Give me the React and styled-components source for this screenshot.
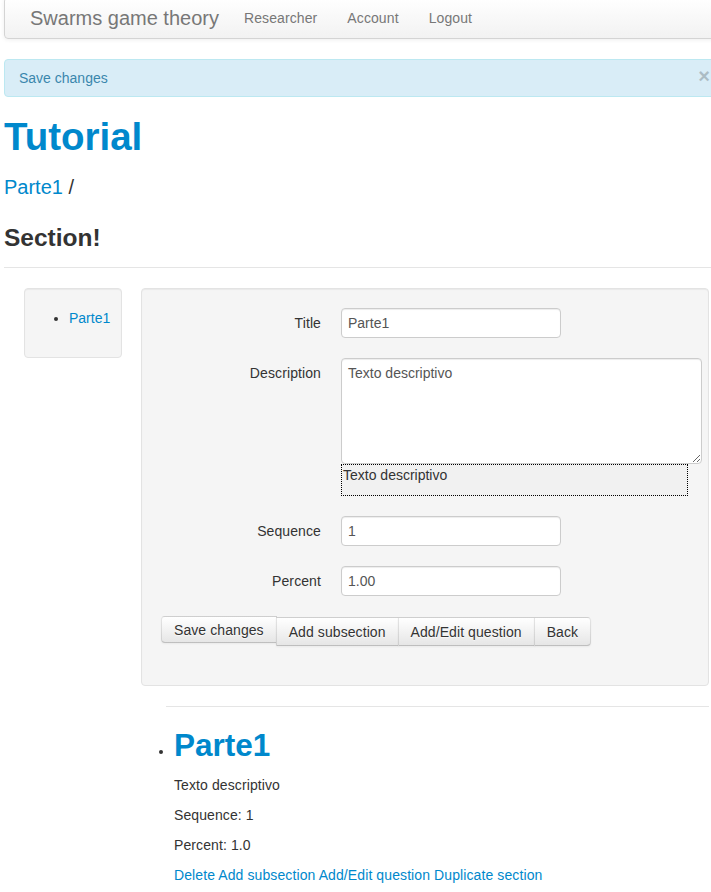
import React from "react";
import styled, { createGlobalStyle } from "styled-components";

const Global = createGlobalStyle`
  html, body { margin: 0; padding: 0; background: #fff; overflow-x: hidden; }
  body {
    font-family: "Liberation Sans", Arial, Helvetica, sans-serif;
    font-size: 14px;
    line-height: 20px;
    color: #333;
  }
  * { box-sizing: border-box; }
`;

const Page = styled.div`
  width: 721px;
  margin-left: 4px;
`;

const Navbar = styled.div`
  margin-top: -3px;
  margin-bottom: 20px;
  height: 42px;
  display: flex;
  align-items: center;
  padding-left: 25px;
  border: 1px solid #d4d4d4;
  border-radius: 4px;
  background: linear-gradient(to bottom, #ffffff, #f2f2f2);
  box-shadow: 0 1px 4px rgba(0, 0, 0, 0.065);
`;

const Brand = styled.a`
  font-size: 20px;
  line-height: 20px;
  color: #777;
  text-decoration: none;
  margin-right: 10px;
`;

const NavLink = styled.a`
  padding: 0 15px;
  font-size: 14px;
  letter-spacing: 0.1px;
  color: #777;
  text-decoration: none;
`;

const Alert = styled.div`
  display: flex;
  justify-content: space-between;
  padding: 8px 35px 8px 14px;
  border: 1px solid #bce8f1;
  border-radius: 4px;
  background: #d9edf7;
  color: #3a87ad;
  line-height: 20px;
  margin-bottom: 20px;
`;

const Close = styled.span`
  margin-right: -21px;
  margin-top: -2px;
  font-size: 20px;
  font-weight: bold;
  line-height: 20px;
  color: #000;
  opacity: 0.2;
`;

const Title = styled.h1`
  margin: 0 0 10px;
  font-size: 38.5px;
  line-height: 40px;
  font-weight: bold;
  color: #0088cc;
`;

const Crumbs = styled.div`
  font-size: 20px;
  line-height: 40px;
  color: #333;
`;

const Link = styled.a`
  color: #0088cc;
  text-decoration: none;
`;

const SectionTitle = styled.h3`
  margin: 11px 0 0;
  font-size: 24.5px;
  line-height: 40px;
  font-weight: bold;
  color: #333;
`;

const Rule = styled.hr`
  margin: ${(p) => p.$m || "0"};
  border: 0;
  border-top: 1px solid #e5e5e5;
  border-bottom: 1px solid #fff;
  height: 0;
`;

const Row = styled.div`
  display: flex;
  align-items: flex-start;
  padding-left: 20px;
  gap: 19px;
`;

const Well = styled.div`
  background: #f5f5f5;
  border: 1px solid #e3e3e3;
  border-radius: 4px;
  padding: 19px;
  box-shadow: inset 0 1px 1px rgba(0, 0, 0, 0.05);
  margin-bottom: 20px;
  width: ${(p) => p.$w}px;
  flex-shrink: 0;
`;

const NavList = styled.ul`
  margin: 0 0 10px 25px;
  padding: 0;
  line-height: 20px;
`;

const Main = styled.div`
  width: 568px;
  flex-shrink: 0;
  display: flex;
  flex-direction: column;
`;

const Group = styled.div`
  display: flex;
  align-items: flex-start;
  margin-bottom: 20px;
`;

const Label = styled.label`
  width: 160px;
  flex-shrink: 0;
  padding-top: 5px;
  text-align: right;
  line-height: 20px;
  letter-spacing: 0.1px;
  color: #333;
`;

const Controls = styled.div`
  margin-left: 20px;
  flex-shrink: 0;
  display: flex;
  flex-direction: column;
`;

const Input = styled.input`
  width: 220px;
  height: 30px;
  padding: 4px 6px;
  font-family: inherit;
  font-size: 14px;
  line-height: 20px;
  color: #555;
  background: #fff;
  border: 1px solid #ccc;
  border-radius: 4px;
  box-shadow: inset 0 1px 1px rgba(0, 0, 0, 0.075);
  outline: none;
`;

const TextArea = styled.textarea`
  width: 361px;
  height: 106px;
  padding: 4px 6px;
  font-family: inherit;
  font-size: 14px;
  line-height: 20px;
  color: #555;
  background: #fff;
  border: 1px solid #ccc;
  border-radius: 4px;
  box-shadow: inset 0 1px 1px rgba(0, 0, 0, 0.075);
  outline: none;
  display: block;
`;

const Preview = styled.div`
  width: 347px;
  min-height: 32px;
  padding: 0 1px;
  background: #f1f1f1;
  border: 1px dotted #000;
  line-height: 20px;
  color: #333;
`;

const BtnGroup = styled.div`
  display: flex;
  align-items: flex-start;
  margin-bottom: 20px;
`;

const Btn = styled.a`
  display: inline-block;
  padding: ${(p) => (p.$short ? "3px 12px 2px" : "4px 12px 3px")};
  margin-top: ${(p) => (p.$short ? "0" : "1px")};
  margin-left: ${(p) => (p.$first ? "0" : "-1px")};
  font-size: 14px;
  line-height: 20px;
  letter-spacing: 0.08px;
  color: #333;
  text-decoration: none;
  text-shadow: 0 1px 1px rgba(255, 255, 255, 0.75);
  background: linear-gradient(to bottom, #ffffff, #e6e6e6);
  border: 1px solid #cccccc;
  border-color: rgba(0, 0, 0, 0.1) rgba(0, 0, 0, 0.1) rgba(0, 0, 0, 0.25);
  border-radius: ${(p) =>
    p.$first ? "4px 0 0 4px" : p.$last ? "0 4px 4px 0" : "0"};
  box-shadow: inset 0 1px 0 rgba(255, 255, 255, 0.2),
    0 1px 2px rgba(0, 0, 0, 0.05);
  white-space: nowrap;
`;

const Sub = styled.div`
  margin-left: 25px;
`;

const SubList = styled.ul`
  margin: 0 0 0 8px;
  padding: 0;
  list-style: disc outside;
`;

const SubTitle = styled.h2`
  margin: 17px 0 10px;
  font-size: 31.5px;
  line-height: 40px;
  font-weight: bold;
  color: #0088cc;
`;

const Para = styled.p`
  margin: 0 0 10px;
  line-height: 20px;
  letter-spacing: 0.1px;
  color: #333;
`;

export default function App() {
  return (
    <>
      <Global />
      <Page>
        <Navbar>
          <Brand>Swarms game theory</Brand>
          <NavLink>Researcher</NavLink>
          <NavLink>Account</NavLink>
          <NavLink>Logout</NavLink>
        </Navbar>
        <Alert>
          <span>Save changes</span>
          <Close>×</Close>
        </Alert>
        <Title>Tutorial</Title>
        <Crumbs>
          <Link>Parte1</Link> /
        </Crumbs>
        <SectionTitle>Section!</SectionTitle>
        <Rule $m="9px 0 19px" />
        <Row>
          <Well $w={98}>
            <NavList>
              <li>
                <Link>Parte1</Link>
              </li>
            </NavList>
          </Well>
          <Main>
            <Well $w={568}>
              <Group>
                <Label>Title</Label>
                <Controls>
                  <Input defaultValue="Parte1" />
                </Controls>
              </Group>
              <Group>
                <Label>Description</Label>
                <Controls>
                  <TextArea defaultValue="Texto descriptivo" />
                  <Preview>Texto descriptivo</Preview>
                </Controls>
              </Group>
              <Group>
                <Label>Sequence</Label>
                <Controls>
                  <Input defaultValue="1" />
                </Controls>
              </Group>
              <Group>
                <Label>Percent</Label>
                <Controls>
                  <Input defaultValue="1.00" />
                </Controls>
              </Group>
              <BtnGroup>
                <Btn $first $short>Save changes</Btn>
                <Btn>Add subsection</Btn>
                <Btn>Add/Edit question</Btn>
                <Btn $last>Back</Btn>
              </BtnGroup>
            </Well>
            <Sub>
              <Rule />
              <SubList>
                <li>
                  <SubTitle>Parte1</SubTitle>
                  <Para>Texto descriptivo</Para>
                  <Para>Sequence: 1</Para>
                  <Para>Percent: 1.0</Para>
                  <Para>
                    <Link>Delete</Link> <Link>Add subsection</Link>{" "}
                    <Link>Add/Edit question</Link> <Link>Duplicate section</Link>
                  </Para>
                </li>
              </SubList>
            </Sub>
          </Main>
        </Row>
      </Page>
    </>
  );
}
